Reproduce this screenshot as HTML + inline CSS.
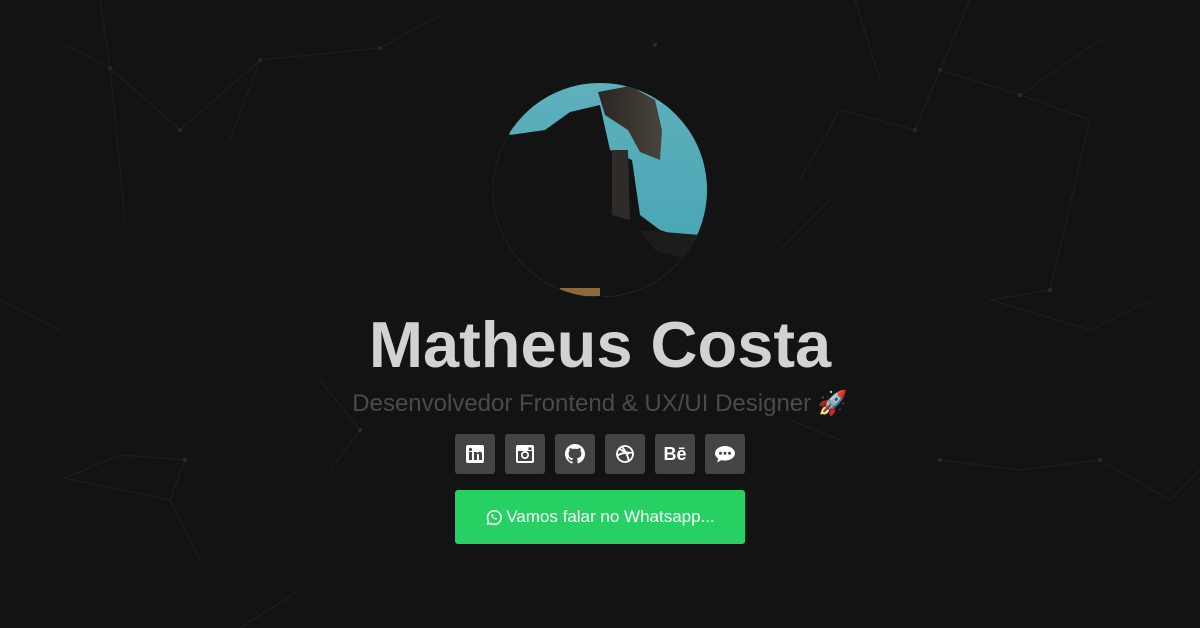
<!DOCTYPE html>
<html><head><meta charset="utf-8"><style>
html,body{margin:0;padding:0;width:1200px;height:628px;overflow:hidden;background:#131313;font-family:"Liberation Sans",sans-serif}
.bg{position:absolute;left:0;top:0}
.name{position:absolute;left:0;width:1200px;top:305px;text-align:center;font-size:65px;font-weight:bold;color:#d2d2d2;line-height:80px}
.sub{position:absolute;left:0;width:1200px;top:390px;text-align:center;font-size:24px;color:#4a4a4a;line-height:28px}
.icons{position:absolute;left:455px;top:434px;display:flex;gap:10px}
.ic{width:40px;height:40px;background:#444;border-radius:3px;display:flex;align-items:center;justify-content:center;color:#fff;font-weight:bold;font-size:18px}
.btn{position:absolute;left:455px;top:490px;width:290px;height:54px;background:#27d062;border-radius:3px;color:#fff;font-size:17px;display:flex;align-items:center;justify-content:center;gap:4px}
</style></head><body>
<svg class="bg" width="1200" height="628" stroke="#1f1f1f" stroke-width="1" fill="none">
<path d="M65 45L110 68L180 130L260 60L380 48L440 15M100 0L110 68L125 220M260 60L230 140M940 70L1020 95L1090 120L1050 290L990 300M940 70L915 130L840 110L800 180M1020 95L1100 40M855 0L880 80M970 0L940 70M120 455L185 460L170 500L65 478L120 455M170 500L200 560M1100 460L1170 500L1200 470M1100 460L1020 470L940 460M300 590L240 628M990 300L1090 330L1150 300M320 380L360 430L330 470M790 420L840 440M0 300L60 330M780 250L830 200"/>
<g fill="#2a2a2a" stroke="none"><circle cx="110" cy="68" r="2"/><circle cx="180" cy="130" r="2"/><circle cx="260" cy="60" r="2"/><circle cx="380" cy="48" r="2"/><circle cx="940" cy="70" r="2"/><circle cx="1020" cy="95" r="2"/><circle cx="915" cy="130" r="2"/><circle cx="1050" cy="290" r="2"/><circle cx="185" cy="460" r="2"/><circle cx="1100" cy="460" r="2"/><circle cx="360" cy="430" r="2"/><circle cx="655" cy="45" r="2"/><circle cx="940" cy="460" r="2"/></g>
</svg>
<svg class="bg" width="1200" height="628">
<defs><clipPath id="c"><circle cx="600" cy="190" r="107"/></clipPath>
<linearGradient id="sky" x1="0" y1="0" x2="0" y2="1"><stop offset="0" stop-color="#5fb0bd"/><stop offset="0.7" stop-color="#4aa7b4"/><stop offset="1" stop-color="#9cc9d0"/></linearGradient>
<linearGradient id="hd" x1="0" y1="0" x2="1" y2="0"><stop offset="0" stop-color="#2a2522"/><stop offset="1" stop-color="#4a433d"/></linearGradient></defs>
<g clip-path="url(#c)">
<rect x="490" y="80" width="220" height="220" fill="url(#sky)"/>
<path d="M490 80L490 300L710 300L705 250L690 240L660 230L640 215L632 160L610 150L600 105L570 112L545 130L510 135Z" fill="#131313"/>
<path d="M598 92L630 86L655 100L662 130L660 160L640 152L628 130L605 115Z" fill="url(#hd)"/>
<path d="M612 150L628 150L630 220L612 215Z" fill="#2e2b29"/>
<path d="M640 230L700 235L690 260L655 250Z" fill="#1c1c1c"/>
<rect x="560" y="288" width="40" height="8" fill="#8a6a3a"/>
</g>
</svg>
<div class="name">Matheus Costa</div>
<div class="sub">Desenvolvedor Frontend &amp; UX/UI Designer <span style="color:#e0325a">🚀</span></div>
<div class="icons">
<div class="ic"><svg width="18" height="18" viewBox="0 0 18 18"><rect width="18" height="18" rx="2" fill="#fff"/><rect x="3" y="7" width="3" height="8" fill="#444"/><circle cx="4.5" cy="4.5" r="1.6" fill="#444"/><path d="M8 7h3v1.3c.6-1 1.6-1.5 2.7-1.5 2 0 2.3 1.4 2.3 3.2V15h-3v-4.5c0-1-.2-1.6-1-1.6s-1 .6-1 1.6V15H8z" fill="#444"/></svg></div>
<div class="ic"><svg width="18" height="18" viewBox="0 0 18 18"><rect width="18" height="18" rx="2" fill="#fff"/><rect x="2" y="6" width="14" height="10" fill="#444"/><circle cx="9" cy="10" r="4" fill="#fff"/><circle cx="9" cy="10" r="2.3" fill="#444"/><rect x="12.5" y="2.5" width="3" height="2.5" fill="#444"/></svg></div>
<div class="ic"><svg width="20" height="20" viewBox="0 0 16 16"><path fill="#fff" d="M8 0C3.6 0 0 3.6 0 8c0 3.5 2.3 6.5 5.5 7.6.4.1.5-.2.5-.4v-1.4c-2.2.5-2.7-1-2.7-1-.4-.9-.9-1.200-.9-1.2-.7-.5.1-.5.1-.5.8.1 1.2.8 1.2.8.7 1.2 1.9.9 2.3.7.1-.5.3-.9.5-1.1-1.8-.2-3.6-.9-3.600-4 0-.9.3-1.6.8-2.1-.1-.2-.4-1 .1-2.1 0 0 .7-.2 2.2.8.6-.2 1.3-.3 2-.3s1.4.1 2 .3c1.5-1 2.2-.8 2.2-.8.4 1.1.2 1.9.1 2.1.5.6.8 1.3.8 2.1 0 3.1-1.9 3.7-3.6 3.9.3.3.5.8.5 1.5v2.2c0 .2.1.5.6.4C13.7 14.5 16 11.5 16 8c0-4.4-3.6-8-8-8z"/></svg></div>
<div class="ic"><svg width="20" height="20" viewBox="0 0 20 20" fill="none" stroke="#fff" stroke-width="1.8"><circle cx="10" cy="10" r="8"/><path d="M4 4.5c4 3 9 5 14 4M7 2.5c3 4 6 9 7 15M2 12c4-3 9-4 12-2"/></svg></div>
<div class="ic">Bē</div>
<div class="ic"><svg width="22" height="20" viewBox="0 0 22 20"><path d="M11 2C5.5 2 1 5.3 1 9.3c0 2.2 1.3 4.1 3.3 5.4L3 18.5l4.5-2.4c1.1.3 2.3.5 3.5.5 5.5 0 10-3.3 10-7.3S16.5 2 11 2z" fill="#fff"/><circle cx="6.5" cy="9.3" r="1.5" fill="#444"/><circle cx="11" cy="9.3" r="1.5" fill="#444"/><circle cx="15.5" cy="9.3" r="1.5" fill="#444"/></svg></div>
</div>
<div class="btn"><svg width="17" height="17" viewBox="0 0 20 20" fill="none" stroke="#fff" stroke-width="1.8"><path d="M3 17.5l1-3.5A8 8 0 1 1 7 17z"/><path d="M7.5 6.5c0 3 3 6 6 6l1-1.3-1.8-1-1 .7c-1-.5-2-1.5-2.5-2.5l.7-1-1-1.8z" fill="#fff" stroke="none"/></svg>Vamos falar no Whatsapp...</div>
</body></html>
